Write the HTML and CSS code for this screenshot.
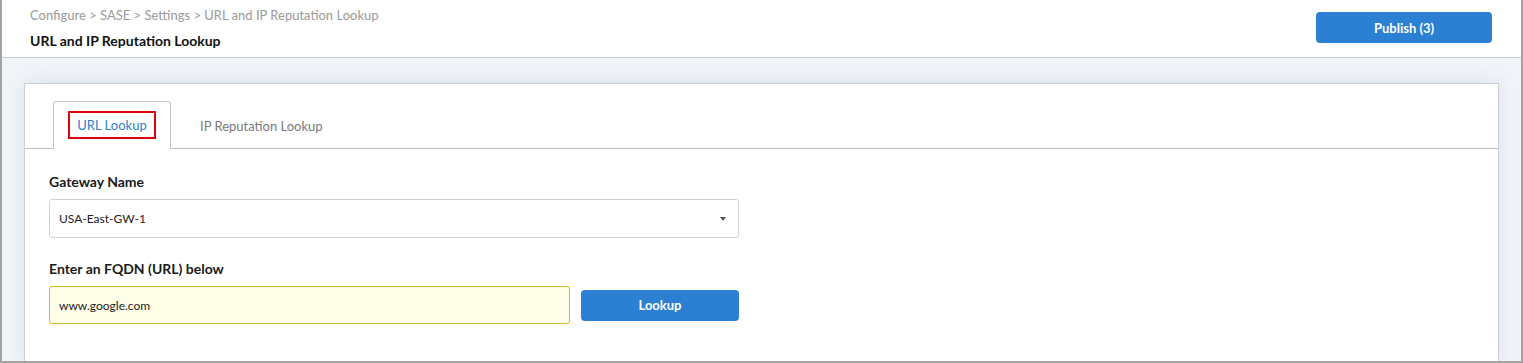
FILE: index.html
```html
<!DOCTYPE html>
<html lang="en">
<head>
  <meta charset="UTF-8">
  <title>URL and IP Reputation Lookup</title>
  <link rel="stylesheet" href="styles.css">
</head>
<body>

<div class="frame">

  <div class="header">
    <div class="header-text">
      <div class="breadcrumb">Configure &gt; SASE &gt; Settings &gt; URL and IP Reputation Lookup</div>
      <div class="page-title">URL and IP Reputation Lookup</div>
    </div>
    <button class="btn publish">Publish (3)</button>
  </div>

  <div class="main">
    <div class="card">

      <div class="tabs">
        <div class="tab active"><span class="tab-label highlight">URL Lookup</span></div>
        <div class="tab"><span class="tab-label">IP Reputation Lookup</span></div>
      </div>

      <div class="form">
        <label class="field-label" for="gateway">Gateway Name</label>
        <div class="select" id="gateway">
          <span>USA-East-GW-1</span>
          <span class="caret"></span>
        </div>

        <label class="field-label" for="fqdn">Enter an FQDN (URL) below</label>
        <div class="lookup-row">
          <input class="fqdn" id="fqdn" type="text" value="www.google.com">
          <button class="btn lookup">Lookup</button>
        </div>
      </div>

    </div>
  </div>

</div>

</body>
</html>
```

FILE: styles.css
```css
html, body {
  margin: 0;
  padding: 0;
}
body {
  font-family: Lato, 'Open Sans', sans-serif;
  color: #1a1a1a;
}
.frame {
  height: 363px;
  box-sizing: border-box;
  border: 2px solid #a3a3a3;
  border-top: none;
  overflow: hidden;
  display: flex;
  flex-direction: column;
}
.header {
  display: flex;
  justify-content: space-between;
  align-items: flex-start;
  height: 57px;
  padding: 0 29px 0 28px;
  background: #fff;
  border-bottom: 1px solid #c8c8c8;
}
.breadcrumb {
  font-size: 13px;
  color: #9a9a9a;
  margin-top: 7px;
  line-height: 17px;
}
.page-title {
  font-size: 14px;
  font-weight: bold;
  color: #111;
  margin-top: 8px;
  line-height: 17px;
}
.btn {
  background: #2b80d3;
  color: #fff;
  border: none;
  border-radius: 4px;
  font-family: Lato, sans-serif;
  font-weight: bold;
  font-size: 13px;
  cursor: pointer;
}
.publish {
  width: 176px;
  height: 31px;
  margin-top: 12px;
}
.main {
  flex: 1;
  background: #f1f5fa;
  padding: 25px 22px 0 22px;
}
.card {
  height: 100%;
  background: #fff;
  border: 1px solid #cfcfcf;
  border-bottom: none;
  box-shadow: 0 0 18px rgba(160, 175, 195, 0.3);
}
.tabs {
  display: flex;
  align-items: flex-end;
  height: 64px;
  padding-left: 28px;
  border-bottom: 1px solid #bdbdbd;
}
.tab {
  height: 48px;
  box-sizing: border-box;
  display: flex;
  align-items: center;
  margin-bottom: -1px;
  font-size: 13px;
  color: #7a7a7a;
  white-space: nowrap;
  border: 1px solid transparent;
  border-bottom: none;
}
.tab.active {
  width: 118px;
  justify-content: center;
  background: #fff;
  border-color: #c4c4c4;
  border-bottom: 1px solid #fff;
  border-radius: 4px 4px 0 0;
  color: #2e7fcb;
}
.tab-label {
  line-height: 24px;
}
.tab.active + .tab {
  padding-left: 28px;
}
.highlight {
  padding: 0 7px;
  border: 2px solid #e3000f;
}
.form {
  padding: 24px 24px 0 24px;
  display: flex;
  flex-direction: column;
}
.field-label {
  font-size: 14px;
  font-weight: bold;
  color: #1a1a1a;
  line-height: 18px;
  margin-bottom: 8px;
}
.select {
  width: 690px;
  height: 39px;
  box-sizing: border-box;
  border: 1px solid #d2d2d2;
  border-radius: 3px;
  display: flex;
  align-items: center;
  justify-content: space-between;
  padding: 0 12px 0 9px;
  font-size: 12px;
  color: #222;
  margin-bottom: 22px;
}
.caret {
  width: 0;
  height: 0;
  border-left: 3px solid transparent;
  border-right: 3px solid transparent;
  border-top: 4px solid #555;
}
.lookup-row {
  display: flex;
  align-items: center;
  gap: 11px;
}
.fqdn {
  width: 521px;
  height: 38px;
  box-sizing: border-box;
  background: #fefee9;
  border: 1px solid #d2bd26;
  border-radius: 3px;
  padding: 0 9px;
  font-family: Lato, sans-serif;
  font-size: 12px;
  color: #222;
  outline: none;
}
.lookup {
  width: 158px;
  height: 31px;
}
```
